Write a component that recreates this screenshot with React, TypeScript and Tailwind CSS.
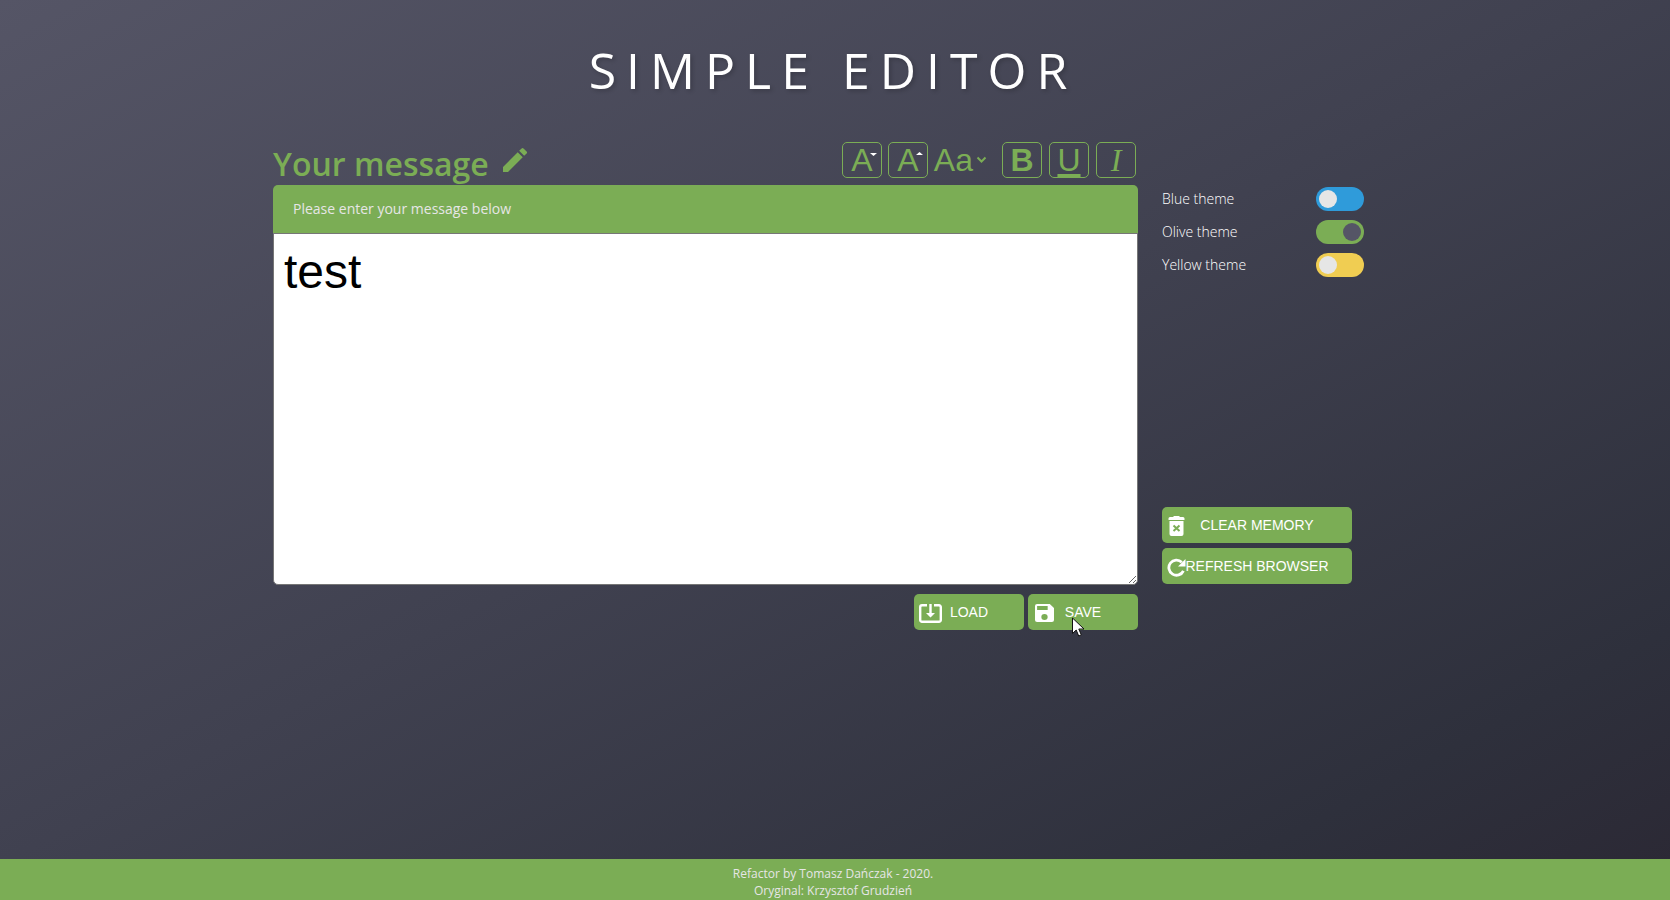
import { useState } from "react";
import { MdEdit } from "react-icons/md";

const green = "#7bad55";

const themes = [
  { id: "blue", label: "Blue theme", track: "bg-[#2f9bda]" },
  { id: "olive", label: "Olive theme", track: "bg-[#7bad55]" },
  { id: "yellow", label: "Yellow theme", track: "bg-[#f0cd52]" },
];

const toolButton =
  "relative flex h-9 w-10 items-center justify-center rounded-[5px] border border-[#7bad55] text-[32px] leading-8";
const actionButton =
  "relative flex h-9 items-center justify-center rounded-[5px] bg-[#7bad55] font-['Liberation_Sans',Arial,sans-serif] text-sm text-white uppercase";

function TrashIcon() {
  return (
    <svg className="absolute left-[6px] top-[9px]" width="17" height="20" viewBox="0 0 17 20" aria-hidden="true">
      <path fill="#fff" d="M5.500 0h6v1H15a1.500 1.500 0 0 1 1.500 1.500V4H.500V2.500A1.500 1.500 0 0 1 2 1h3.500z" />
      <path fill="#fff" d="M1.500 5h14v13a2 2 0 0 1-2 2h-10a2 2 0 0 1-2-2z" />
      <path stroke={green} strokeWidth="2" d="M5.500 9.500l6 5.500M11.500 9.500l-6 5.500" />
    </svg>
  );
}

function RefreshIcon() {
  return (
    <svg className="absolute left-[5px] top-[10px]" width="19" height="19" viewBox="0 0 19 19" aria-hidden="true">
      <path fill="none" stroke="#fff" strokeWidth="2.800" d="M14.800 4.200A7.600 7.600 0 1 0 16.400 12.800" />
      <path fill="#fff" d="M18.500 1v7.500H11z" />
    </svg>
  );
}

function LoadIcon() {
  return (
    <svg className="absolute left-[5px] top-[10px]" width="23" height="19" viewBox="0 0 23 19" aria-hidden="true">
      <path fill="none" stroke="#fff" strokeWidth="2.400" d="M8 1.200H3a1.800 1.800 0 0 0-1.800 1.800v13a1.800 1.800 0 0 0 1.800 1.800h17a1.800 1.800 0 0 0 1.800-1.800V3A1.800 1.800 0 0 0 20 1.200h-5" />
      <path fill="#fff" d="M10.300 0h2.400v9H16l-4.500 4.500L7 9h3.300z" />
    </svg>
  );
}

function SaveIcon() {
  return (
    <svg className="absolute left-[7px] top-[10px]" width="19" height="18" viewBox="3 3 18 18" preserveAspectRatio="none" aria-hidden="true">
      <path fill="#fff" d="M17 3H5a2 2 0 0 0-2 2v14a2 2 0 0 0 2 2h14a2 2 0 0 0 2-2V7zm-5 16a3 3 0 1 1 0-6 3 3 0 0 1 0 6zm3-10H5V5h10z" />
    </svg>
  );
}

function Pointer() {
  return (
    <svg className="pointer-events-none absolute left-[44px] top-[23px]" width="13" height="20" viewBox="0 0 13 20" aria-hidden="true">
      <path fill="#fff" stroke="#111" d="M.5 1v15.500l3.700-3.500 2.500 6 2.600-1.100-2.500-5.900h5.200z" />
    </svg>
  );
}

export default function App() {
  const [theme, setTheme] = useState("olive");
  const [message, setMessage] = useState("test");

  return (
    <div className="flex min-h-screen flex-col bg-[linear-gradient(to_bottom_right,#555566_0%,#404150_48%,#2e303c_85%,#2b2834_100%)] font-['Open_Sans',sans-serif] text-[#e6e6e6]">
      <h1 className="pt-[35px] pr-1 text-center text-[50px] leading-[70px] font-normal tracking-[10px] text-white [text-shadow:2px_2px_4px_rgba(0,0,0,0.2)]">
        SIMPLE EDITOR
      </h1>

      <main className="mx-auto mt-[37px] flex w-full max-w-[1124px] grow gap-6">
        <section className="w-[865px] min-w-0">
          <div className="flex h-[43px] items-start justify-between text-[#7bad55]">
            <h2 className="flex items-start text-[32px] leading-[44px] font-semibold">
              Your message
              <MdEdit className="mt-[2px] ml-[10px] size-8" />
            </h2>
            <div className="flex font-['Liberation_Sans',Arial,sans-serif] pr-[2px]">
              <button type="button" className={toolButton} aria-label="Decrease font size">
                A
                <svg className="absolute top-[10px] right-1" width="7" height="3" aria-hidden="true"><path fill="#fff" d="M0 0h7L3.500 3z" /></svg>
              </button>
              <button type="button" className={toolButton + " ml-[6px]"} aria-label="Increase font size">
                A
                <svg className="absolute top-[9px] right-1" width="7" height="3" aria-hidden="true"><path fill="#fff" d="M0 3h7L3.500 0z" /></svg>
              </button>
              <button type="button" className="mr-[14px] ml-[6px] flex h-9 items-center gap-[3px] text-[32px] leading-8">
                Aa
                <svg width="12" height="8" viewBox="0 0 12 8" aria-hidden="true"><path fill="none" stroke={green} strokeWidth="2" d="M1.500 1.500l4 4 4-4" /></svg>
              </button>
              <div className="flex gap-[7px]">
                <button type="button" className={toolButton + " font-bold"}>B</button>
                <button type="button" className={toolButton + " underline decoration-[3px] underline-offset-[3px]"}>U</button>
                <button type="button" className={toolButton + " font-['Liberation_Serif',serif] italic"}>I</button>
              </div>
            </div>
          </div>
          <label htmlFor="message" className="block h-12 rounded-t-[5px] bg-[#7bad55] px-5 text-sm leading-[48px]">
            Please enter your message below
          </label>
          <textarea
            id="message"
            value={message}
            onChange={(e) => setMessage(e.target.value)}
            className="block h-[352px] w-full resize rounded-b-[5px] border border-[#767676] bg-white p-[10px] font-['Liberation_Sans',Arial,sans-serif] text-[48px] leading-[56px] text-black outline-none"
          />
          <div className="mt-[9px] flex justify-end gap-1">
            <button type="button" className={actionButton + " w-[110px]"}><LoadIcon />Load</button>
            <button type="button" className={actionButton + " w-[110px]"}><SaveIcon />Save<Pointer /></button>
          </div>
        </section>

        <aside className="mt-[43px] flex h-[399px] w-[202px] flex-col justify-between">
          <div className="flex flex-col gap-[9px] pt-[2px]">
            {themes.map((t) => (
              <label key={t.id} className="flex h-6 items-center justify-between text-sm font-light text-white">
                {t.label}
                <input
                  type="checkbox"
                  checked={theme === t.id}
                  onChange={() => setTheme(t.id)}
                  className={
                    "h-6 w-12 appearance-none rounded-full p-[3px] before:block before:size-[18px] before:rounded-full before:bg-[#e6e6e6] checked:before:ml-6 checked:before:bg-[#555566] " +
                    t.track
                  }
                />
              </label>
            ))}
          </div>
          <div className="flex flex-col gap-[5px]">
            <button type="button" className={actionButton + " w-[190px]"}><TrashIcon />Clear memory</button>
            <button type="button" className={actionButton + " w-[190px]"}><RefreshIcon />Refresh browser</button>
          </div>
        </aside>
      </main>

      <footer className="h-[41px] bg-[#7bad55] pt-[6px] pr-1 text-center text-xs leading-[17px]">
        <p>Refactor by Tomasz Dańczak - 2020.</p>
        <p>Oryginal: Krzysztof Grudzień</p>
      </footer>
    </div>
  );
}
